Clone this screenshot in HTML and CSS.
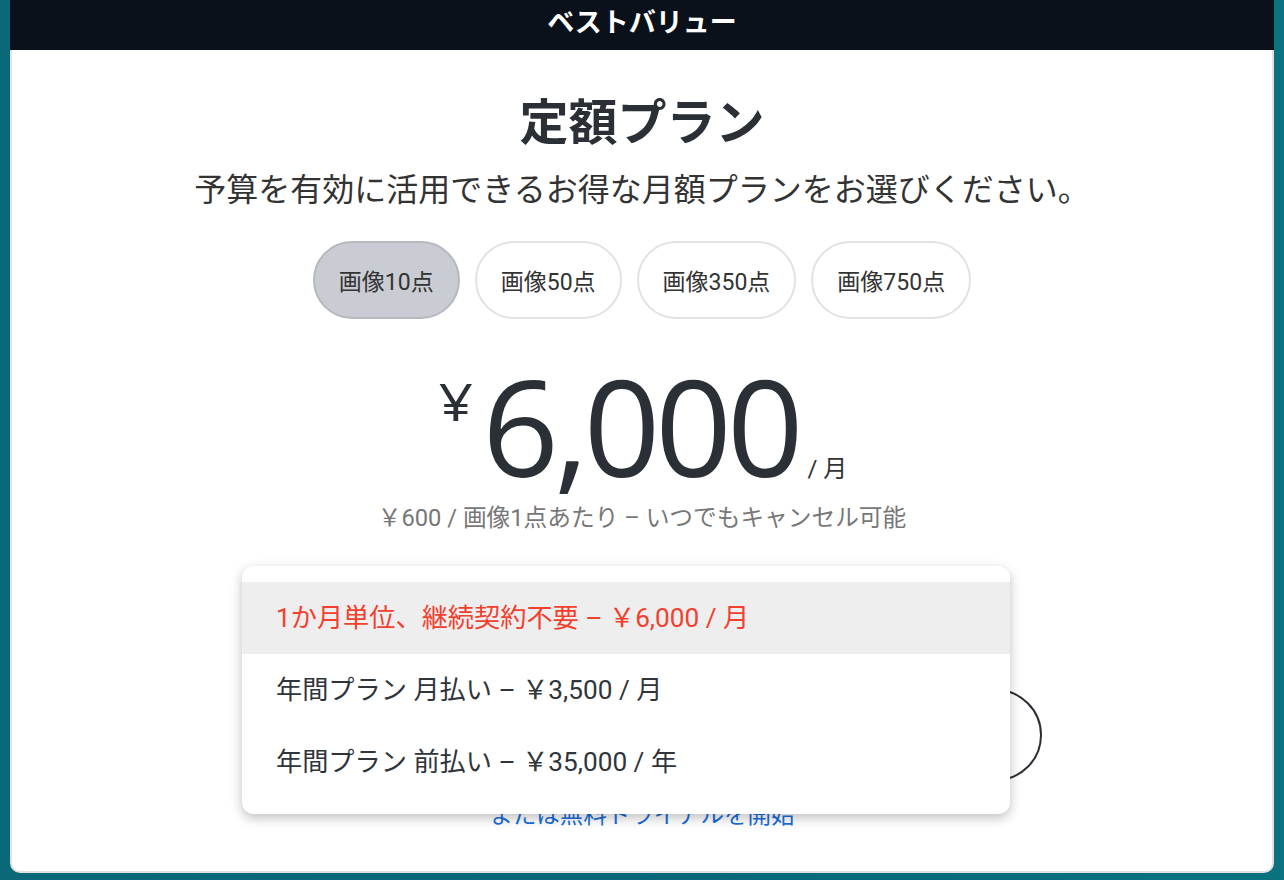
FILE: index.html
```html
<!DOCTYPE html>
<html lang="ja">
<head>
    <meta charset="UTF-8">
    <meta name="viewport" content="width=device-width, initial-scale=1.0">
    <title>定額プラン</title>
    <link rel="stylesheet" href="styles.css">
</head>
<body>
    <div class="modal">
        <header class="badge">ベストバリュー</header>

        <div class="content">
            <h1 class="title">定額プラン</h1>
            <p class="lead">予算を有効に活用できるお得な月額プランをお選びください。</p>

            <div class="packs">
                <button class="pack active">画像10点</button>
                <button class="pack">画像50点</button>
                <button class="pack">画像350点</button>
                <button class="pack">画像750点</button>
            </div>

            <div class="price">
                <span class="currency">¥</span>
                <span class="amount">6,000</span>
                <span class="per">/ 月</span>
            </div>
            <p class="unit">￥600 / 画像1点あたり – いつでもキャンセル可能</p>

            <button class="buy">今すぐ購入</button>
            <a href="#" class="trial">または無料トライアルを開始</a>
        </div>

        <ul class="menu">
            <li class="selected">1か月単位、継続契約不要 – ￥6,000 / 月</li>
            <li>年間プラン 月払い – ￥3,500 / 月</li>
            <li>年間プラン 前払い – ￥35,000 / 年</li>
        </ul>
    </div>
</body>
</html>
```

FILE: styles.css
```css
body{
    margin: 0;
    padding: 0;
    height: 880px;
    overflow: hidden;
    background: linear-gradient(90deg, #0a6878, #08677a 50%, #0b7280);
    font-family: Roboto, "Noto Sans CJK JP", sans-serif;
}
.modal{
    position: relative;
    box-sizing: border-box;
    height: 873px;
    margin: 0 10px;
    background-color: #fff;
    border: 2px solid #e2e2e2;
    border-top: 0;
    border-radius: 0 0 10px 10px;
}
.badge{
    margin: 0 -2px;
    height: 50px;
    line-height: 46px;
    background-color: #0b111b;
    color: #fff;
    text-align: center;
    font-size: 27px;
    font-weight: 700;
}
.content{
    display: flex;
    flex-direction: column;
    align-items: center;
}
.title{
    margin: 45px 0 0;
    line-height: 58px;
    font-size: 49px;
    font-weight: 700;
    color: #2b2f36;
}
.lead{
    margin: 15px 0 0;
    line-height: 44px;
    font-size: 32px;
    color: #333;
}
.packs{
    display: flex;
    gap: 15px;
    margin-top: 29px;
}
.pack{
    height: 78px;
    padding: 0 24px;
    border: 2px solid #e2e2e2;
    border-radius: 39px;
    background-color: #fff;
    color: #333;
    font-family: inherit;
    font-size: 23px;
}
.pack.active{
    background-color: #c9cdd3;
    border-color: #b5b9bf;
}
.price{
    display: flex;
    align-items: baseline;
    margin-top: 56px;
    color: #2b2f36;
    font-family: "Open Sans", sans-serif;
}
.currency{
    align-self: flex-start;
    margin: 0 12px 0 4px;
    line-height: 52px;
    font-size: 52px;
    transform: scaleX(1.15);
}
.amount{
    line-height: 100px;
    font-size: 134px;
    letter-spacing: -5px;
}
.per{
    margin-left: 9px;
    font-family: Roboto, "Noto Sans CJK JP", sans-serif;
    font-size: 24px;
    color: #333;
}
.unit{
    margin: 18px 0 0;
    line-height: 32px;
    font-size: 23.7px;
    color: #777;
}
.buy{
    width: 800px;
    height: 92px;
    margin-top: 155px;
    border: 2px solid #2b2f36;
    border-radius: 46px;
    background-color: #fff;
    color: #2b2f36;
    font-family: inherit;
    font-size: 26px;
}
.trial{
    margin-top: 18px;
    line-height: 32px;
    font-size: 23.5px;
    color: #1a6fdc;
    text-decoration: none;
}
.menu{
    position: absolute;
    left: 230px;
    top: 566px;
    width: 768px;
    margin: 0;
    padding: 16px 0;
    list-style: none;
    background-color: #fff;
    border-radius: 12px;
    box-shadow: 0 4px 12px rgba(0,0,0,0.25);
}
.menu li{
    height: 72px;
    line-height: 72px;
    padding-left: 34px;
    font-size: 26.2px;
    color: #30343b;
}
.menu li.selected{
    background-color: #eee;
    color: #f2402f;
}
```
